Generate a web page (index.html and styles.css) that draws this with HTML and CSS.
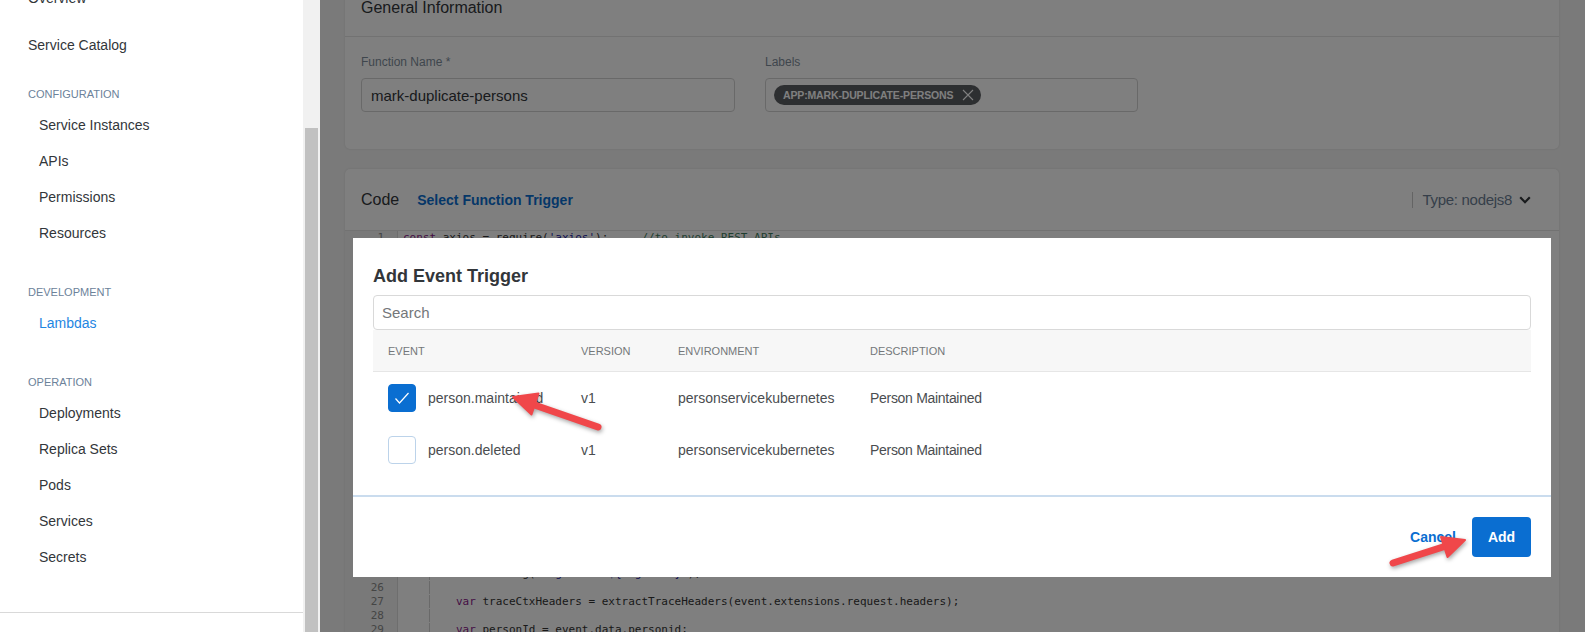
FILE: index.html
```html
<!DOCTYPE html>
<html lang="en">
<head>
<meta charset="utf-8">
<title>Lambdas - Add Event Trigger</title>
<link rel="stylesheet" href="styles.css">
</head>
<body>
<aside class="sidebar">
  <nav class="nav">
    <div class="item top">Overview</div>
    <div class="item top">Service Catalog</div>
    <div class="section first">
      <div class="sec-title">CONFIGURATION</div>
      <div class="item">Service Instances</div>
      <div class="item">APIs</div>
      <div class="item">Permissions</div>
      <div class="item">Resources</div>
    </div>
    <div class="section">
      <div class="sec-title">DEVELOPMENT</div>
      <div class="item active">Lambdas</div>
    </div>
    <div class="section">
      <div class="sec-title">OPERATION</div>
      <div class="item">Deployments</div>
      <div class="item">Replica Sets</div>
      <div class="item">Pods</div>
      <div class="item">Services</div>
      <div class="item">Secrets</div>
    </div>
  </nav>
  <div class="sb-foot"></div>
</aside>
<div class="sb-track"><div class="sb-thumb"></div></div>

<main class="main">
  <section class="card general">
    <div class="card-head">General Information</div>
    <div class="gi-body">
      <div class="field">
        <div class="label">Function Name *</div>
        <div class="input">mark-duplicate-persons</div>
      </div>
      <div class="field">
        <div class="label">Labels</div>
        <div class="input labels">
          <span class="chip">APP:MARK-DUPLICATE-PERSONS
            <svg class="chip-x" viewBox="0 0 12 12" width="12" height="12"><path d="M1 1L11 11M11 1L1 11" stroke="#fff" stroke-width="1.1" fill="none"/></svg>
          </span>
        </div>
      </div>
    </div>
  </section>

  <section class="card code">
    <div class="code-head">
      <span class="code-title">Code</span>
      <span class="trigger-link">Select Function Trigger</span>
      <span class="spacer"></span>
      <span class="type">Type: nodejs8</span>
      <svg class="chev" viewBox="0 0 12 8" width="12" height="8"><path d="M1.2 1.2L6 6.2L10.8 1.2" stroke="#32363a" stroke-width="2.2" fill="none"/></svg>
    </div>
    <div class="editor">
      <div class="line"><span class="ln">1</span><span class="lc"><span class="kw">const</span> axios = require(<span class="str">'axios'</span>);     <span class="cm">//to invoke REST APIs</span></span></div>
      <div class="line"><span class="ln">2</span><span class="lc"></span></div>
      <div class="line"><span class="ln">3</span><span class="lc"><span class="kw">const</span> traceHeaders = [<span class="str">'x-request-id'</span>, <span class="str">'x-b3-traceid'</span>, <span class="str">'x-b3-spanid'</span>, <span class="str">'x-b3-parentspanid'</span>, <span class="str">'x-b3-sampled'</span>];</span></div>
      <div class="line"><span class="ln">4</span><span class="lc"></span></div>
      <div class="line"><span class="ln">5</span><span class="lc"><span class="kw">const</span> logLevel = process.env.LOG_LEVEL || <span class="str">'info'</span>;</span></div>
      <div class="line"><span class="ln">6</span><span class="lc"></span></div>
      <div class="line"><span class="ln">7</span><span class="lc"><span class="kw">function</span> extractTraceHeaders(headers) {</span></div>
      <div class="line"><span class="ln">8</span><span class="lc">    <span class="kw">var</span> map = {};</span></div>
      <div class="line"><span class="ln">9</span><span class="lc">    <span class="kw">for</span> (<span class="kw">var</span> i in traceHeaders) {</span></div>
      <div class="line"><span class="ln">10</span><span class="lc"><span class="g">    </span>    <span class="kw">var</span> h = traceHeaders[i];</span></div>
      <div class="line"><span class="ln">11</span><span class="lc"><span class="g">    </span>    <span class="kw">var</span> headerVal = headers[h];</span></div>
      <div class="line"><span class="ln">12</span><span class="lc"><span class="g">    </span>    <span class="kw">if</span> (headerVal !== undefined) {</span></div>
      <div class="line"><span class="ln">13</span><span class="lc"><span class="g">    </span>        map[h] = headerVal;</span></div>
      <div class="line"><span class="ln">14</span><span class="lc"><span class="g">    </span>    }</span></div>
      <div class="line"><span class="ln">15</span><span class="lc">    }</span></div>
      <div class="line"><span class="ln">16</span><span class="lc">    <span class="kw">return</span> map;</span></div>
      <div class="line"><span class="ln">17</span><span class="lc">}</span></div>
      <div class="line"><span class="ln">18</span><span class="lc"></span></div>
      <div class="line"><span class="ln">19</span><span class="lc">module.exports = {</span></div>
      <div class="line"><span class="ln">20</span><span class="lc">    main: <span class="kw">async function</span> (event, context) {</span></div>
      <div class="line"><span class="ln">21</span><span class="lc"><span class="g">    </span>    <span class="cm">// mark persons that look like duplicates</span></span></div>
      <div class="line"><span class="ln">22</span><span class="lc"><span class="g">    </span>    <span class="kw">const</span> apiUrl = process.env.GATEWAY_URL;</span></div>
      <div class="line"><span class="ln">23</span><span class="lc"><span class="g">    </span></span></div>
      <div class="line"><span class="ln">24</span><span class="lc"><span class="g">    </span>    <span class="kw">var</span> logLevel = process.env.LOG_LEVEL;</span></div>
      <div class="line"><span class="ln">25</span><span class="lc"><span class="g">    </span>    console.log(<span class="str">`log level=${logLevel}`</span>);</span></div>
      <div class="line"><span class="ln">26</span><span class="lc"><span class="g">    </span></span></div>
      <div class="line"><span class="ln">27</span><span class="lc"><span class="g">    </span>    <span class="kw">var</span> traceCtxHeaders = extractTraceHeaders(event.extensions.request.headers);</span></div>
      <div class="line"><span class="ln">28</span><span class="lc"><span class="g">    </span></span></div>
      <div class="line"><span class="ln">29</span><span class="lc"><span class="g">    </span>    <span class="kw">var</span> personId = event.data.personid;</span></div>
      <div class="line"><span class="ln">30</span><span class="lc"></span></div>
    </div>
  </section>

  <div class="overlay"></div>

  <div class="modal" role="dialog">
    <div class="modal-body">
      <h2 class="modal-title">Add Event Trigger</h2>
      <div class="search">Search</div>
      <div class="thead">
        <span>Event</span><span>Version</span><span>Environment</span><span>Description</span>
      </div>
      <div class="trow">
        <span class="ev"><span class="cb checked"><svg viewBox="0 0 28 28" width="28" height="28"><polyline points="7.5,14.5 11.5,19 20.5,9" fill="none" stroke="#fff" stroke-width="1.2"/></svg></span>person.maintained</span>
        <span>v1</span><span>personservicekubernetes</span><span class="desc">Person Maintained</span>
      </div>
      <div class="trow">
        <span class="ev"><span class="cb"></span>person.deleted</span>
        <span>v1</span><span>personservicekubernetes</span><span class="desc">Person Maintained</span>
      </div>
    </div>
    <div class="modal-foot">
      <span class="cancel">Cancel</span>
      <span class="btn-add">Add</span>
    </div>
  </div>
</main>

<svg class="annot" viewBox="0 0 1585 632" width="1585" height="632">
  <g fill="#f0474a" stroke="#f0474a">
    <line x1="598" y1="427" x2="533" y2="404.5" stroke-width="7" stroke-linecap="round"/>
    <polygon points="513,397 538.5,393.5 531.5,414.5" stroke-width="2" stroke-linejoin="round"/>
    <line x1="1393" y1="563" x2="1446" y2="546" stroke-width="7" stroke-linecap="round"/>
    <polygon points="1465,540 1441,537 1447.5,557" stroke-width="2" stroke-linejoin="round"/>
  </g>
</svg>
</body>
</html>
```

FILE: styles.css
```css
* { box-sizing: border-box; }

body {
  margin: 0;
  height: 632px;
  overflow: hidden;
  display: flex;
  position: relative;
  font-family: "Liberation Sans", Arial, sans-serif;
  color: #32363a;
}

/* ---------- sidebar ---------- */
.sidebar {
  width: 303px;
  flex: none;
  background: #fff;
}
.nav {
  margin-top: -25px;
  padding-left: 28px;
}
.item {
  height: 36px;
  line-height: 36px;
  font-size: 14px;
  color: #32363a;
  padding-left: 11px;
}
.item.top {
  height: 47px;
  line-height: 47px;
  padding-left: 0;
}
.item.active { color: #1f86e2; }
.section { margin-top: 34px; }
.section.first { margin-top: 18px; }
.sec-title {
  font-size: 11px;
  line-height: 14px;
  color: #6c829a;
  margin-bottom: 6px;
}
.sb-foot {
  margin-top: 37px;
  border-top: 1px solid #d9d9d9;
}
.sb-track {
  width: 17px;
  flex: none;
  background: #f1f1f1;
  padding-top: 128px;
  padding-left: 2px;
}
.sb-thumb {
  width: 13px;
  height: 600px;
  background: #c1c1c1;
}

/* ---------- main ---------- */
.main {
  flex: 1;
  position: relative;
  background: #f4f4f4;
  padding: 0 26px 0 25px;
  overflow: hidden;
}
.card {
  background: #fff;
  border-radius: 5px;
  box-shadow: 0 0 2px rgba(0,0,0,.12);
}
.general { margin-top: -12px; }
.card-head {
  padding: 10px 16px 18px;
  font-size: 16px;
  line-height: 20px;
  border-bottom: 1px solid #e4e4e4;
}
.gi-body {
  display: grid;
  grid-template-columns: 374px 373px;
  column-gap: 30px;
  padding: 17px 16px 37px;
}
.label {
  font-size: 12px;
  line-height: 16px;
  color: #7f8d9b;
  margin-bottom: 8px;
}
.input {
  height: 34px;
  border: 1px solid #d3d3d3;
  border-radius: 4px;
  padding: 0 9px;
  display: flex;
  align-items: center;
  font-size: 15px;
  color: #32363a;
}
.input.labels { padding-left: 8px; }
.chip {
  display: inline-flex;
  align-items: center;
  height: 20px;
  border-radius: 10px;
  background: #5b5e62;
  color: #fff;
  font-size: 10.5px;
  font-weight: bold;
  letter-spacing: -0.15px;
  padding: 0 7px 0 9px;
  gap: 9px;
}
.chip-x { display: block; }

.code { margin-top: 20px; height: 700px; }
.code-head {
  display: flex;
  align-items: center;
  height: 62px;
  padding: 0 28px 0 16px;
  border-bottom: 1px solid #e4e4e4;
}
.code-title { font-size: 16px; }
.trigger-link {
  margin-left: 18px;
  font-size: 14px;
  font-weight: bold;
  color: #0a6ed1;
}
.spacer { flex: 1; }
.type {
  border-left: 1px solid #c9c9c9;
  padding-left: 10px;
  font-size: 15px;
  line-height: 16px;
  color: #6c7f94;
  letter-spacing: -0.3px;
}
.chev { margin-left: 7px; }

.editor {
  font-family: "DejaVu Sans Mono", "Liberation Mono", monospace;
  font-size: 11px;
  line-height: 14px;
}
.line { display: flex; height: 14px; }
.ln {
  width: 53px;
  flex: none;
  background: #f2f2f2;
  border-right: 1px solid #dcdcdc;
  text-align: right;
  padding-right: 13px;
  color: #8a8a8a;
}
.lc {
  padding-left: 5px;
  white-space: pre;
  color: #333;
}
.g { background: linear-gradient(to right, transparent 26px, #d2d2d2 26px, #d2d2d2 27px, transparent 27px); }
.kw { color: #8a1a8a; }
.str { color: #1a1aa6; }
.cm { color: #3f7f5f; }

.overlay {
  position: absolute;
  inset: 0;
  background: rgba(0,0,0,.5);
}

/* ---------- modal ---------- */
.modal {
  position: absolute;
  left: 33px;
  top: 238px;
  width: 1198px;
  height: 339px;
  background: #fff;
  display: flex;
  flex-direction: column;
}
.modal-body {
  flex: 1;
  padding: 27px 20px 0;
}
.modal-title {
  margin: 0 0 8px;
  font-size: 18px;
  line-height: 22px;
  font-weight: bold;
  color: #32363a;
}
.search {
  height: 35px;
  border: 1px solid #d9d9d9;
  border-radius: 4px;
  padding: 0 8px;
  display: flex;
  align-items: center;
  font-size: 15px;
  color: #74777a;
}
.thead, .trow {
  display: grid;
  grid-template-columns: 193px 97px 192px 1fr;
  align-items: center;
  padding-left: 15px;
}
.thead {
  height: 42px;
  background: #f7f7f7;
  border-bottom: 1px solid #e6e6e6;
  font-size: 11px;
  text-transform: uppercase;
  color: #74777a;
}
.trow {
  height: 52px;
  font-size: 14px;
  color: #4a4d50;
}
.ev {
  display: flex;
  align-items: center;
  gap: 12px;
}
.cb {
  width: 28px;
  height: 28px;
  border-radius: 4px;
  border: 1px solid #bcd3ea;
  background: #fff;
  flex: none;
}
.cb.checked {
  background: #0a6ed1;
  border-color: #0a6ed1;
}
.cb svg { display: block; margin: -1px; }
.desc { letter-spacing: -0.3px; }

.modal-foot {
  height: 82px;
  border-top: 2px solid #cadcee;
  display: flex;
  justify-content: flex-end;
  align-items: center;
  gap: 16px;
  padding-right: 20px;
}
.cancel {
  font-size: 14px;
  font-weight: bold;
  color: #0a6ed1;
}
.btn-add {
  width: 59px;
  height: 40px;
  border-radius: 4px;
  background: #0a6ed1;
  color: #fff;
  font-size: 14px;
  font-weight: bold;
  display: flex;
  align-items: center;
  justify-content: center;
}

/* annotation arrows drawn over the screenshot */
.annot {
  position: absolute;
  left: 0;
  top: 0;
  pointer-events: none;
  filter: drop-shadow(1px 2px 2px rgba(0,0,0,.35));
}
```
